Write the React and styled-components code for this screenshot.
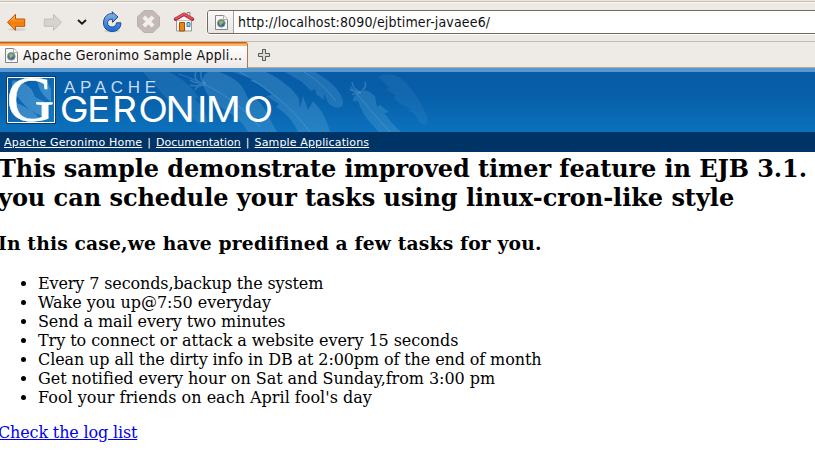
import React from 'react';
import styled, { createGlobalStyle } from 'styled-components';

const Global = createGlobalStyle`
  * { box-sizing: border-box; }
  html, body { margin: 0; background: #fff; overflow: hidden; }
  #root { height: 452px; }
`;

const Window = styled.div`
  display: flex;
  flex-direction: column;
  width: 815px;
  height: 452px;
  overflow: hidden;
  background: #fff;
`;

const Toolbar = styled.div`
  display: flex;
  align-items: flex-start;
  height: 41px;
  flex: none;
  background: linear-gradient(#e9e5df 0 1px, #c8bdb0 1px 2px, #fbfaf8 2px 3px, #edeae5 3px 100%);
`;

const Tools = styled.svg`
  width: 207px;
  height: 41px;
  flex: none;
`;

const Address = styled.div`
  display: flex;
  width: 620px;
  height: 24px;
  flex: none;
  margin-top: 10px;
  border: 1px solid #78675f;
  border-radius: 3px;
  background: #fff;
  box-shadow: 0 1px 0 #fff, -1px 0 0 #f8f6f4;
`;

const SiteBadge = styled.div`
  display: flex;
  width: 26px;
  padding: 3px 0 0 6px;
  border-right: 1px solid #aaa09a;
  border-radius: 2px 0 0 2px;
  background: linear-gradient(#fbfafa, #e9e5e2);
`;

const Label = styled.span`
  font-family: "DejaVu Sans Condensed", "DejaVu Sans", sans-serif;
  font-size: 14px;
  font-stretch: condensed;
  letter-spacing: ${(p) => p.$tracking}px;
  color: #101010;
  white-space: nowrap;
`;

const Url = styled(Label)`
  padding-left: 4px;
  line-height: 23px;
`;

const TabStrip = styled.div`
  display: flex;
  height: 27px;
  flex: none;
  border-top: 1px solid #c5baae;
  border-bottom: 1px solid #b9a995;
  background: #eeebe6;
`;

const Tab = styled.div`
  display: flex;
  align-items: flex-start;
  gap: 4px;
  width: 248px;
  height: 26px;
  padding: 5px 0 0 4px;
  border-right: 1px solid #ac7750;
  border-radius: 0 3px 0 0;
  background: linear-gradient(#b8621b 0 1px, #f58e32 1px 2px, #ffb66b 2px 4px, #fff 4px, #ece8e4 100%);
`;

const TabTitle = styled(Label)`
  line-height: 17px;
`;

const Plus = styled.svg`
  width: 14px;
  height: 14px;
  margin: 6px 0 0 9px;
`;

const Banner = styled.header`
  height: 64px;
  flex: none;
  border-top: 4px solid #5998cf;
  background: linear-gradient(#085ba6, #075fa9 40%, #0c71bd);
`;

const BannerArt = styled.svg`
  display: block;
  width: 450px;
  height: 60px;
`;

const Nav = styled.nav`
  display: flex;
  gap: 5px;
  height: 20px;
  flex: none;
  padding-left: 4px;
  background: #003366;
  color: #fff;
  font: 11px/22px "DejaVu Sans", sans-serif;
  white-space: nowrap;
`;

const NavLink = styled.a`
  color: #fff;
  text-decoration: underline;
  letter-spacing: ${(p) => p.$tracking || 0}px;
`;

const Content = styled.main`
  margin-left: -2px;
  font-family: "DejaVu Serif", serif;
  color: #000;
  white-space: nowrap;
`;

const Title = styled.h1`
  margin: 0;
  padding-top: 2px;
  font-size: 24px;
  line-height: 29px;
`;

const TitleLine = styled.span`
  display: block;
  letter-spacing: ${(p) => p.$tracking}px;
`;

const Subtitle = styled.h2`
  margin: 20px 0 19px;
  font-size: 18.7px;
  line-height: 23px;
  letter-spacing: 0.17px;
`;

const Tasks = styled.ul`
  margin: 0 0 16px;
  padding: 0 0 0 40px;
  font-size: 16px;
  line-height: 19px;
`;

const Task = styled.li`
  letter-spacing: ${(p) => p.$tracking}px;
`;

const LogLink = styled.a`
  display: inline-block;
  font-size: 16px;
  line-height: 19px;
  letter-spacing: -0.15px;
  color: #0000ee;
  text-decoration: underline;
`;

function PageIcon() {
  return (
    <svg width="15" height="17" viewBox="0 0 15 17">
      <path d="M1.5 1.5h8.3l3.7 3.7v10.3h-12z" fill="#f6f6f4" stroke="#858681" />
      <path d="M9.5 1.5v4h4" fill="#fff" stroke="#b0b0ad" />
      <circle cx="7.3" cy="9.3" r="3.9" fill="#3a6794" stroke="#8da0b3" strokeWidth=".8" />
      <path d="M5 7.6l2-1.4 2.7 1-.4 2.3-1.7.6-.5 2-1.8-2z" fill="#9fb350" />
    </svg>
  );
}

function BrowserTools() {
  return (
    <Tools viewBox="0 0 207 41">
      <defs>
        <linearGradient id="orange" x2="0" y2="1"><stop stopColor="#ffc263" /><stop offset=".55" stopColor="#f57900" /><stop offset="1" stopColor="#ffa52c" /></linearGradient>
        <linearGradient id="blue" x2="0" y2="1"><stop stopColor="#91b8e1" /><stop offset="1" stopColor="#1769dc" /></linearGradient>
      </defs>
      <ellipse cx="17" cy="29.5" rx="9" ry="1.5" fill="#d5d1cc" />
      <path d="M7.5 22.3l8-8v4.7h9.2v7.3h-9.2v4z" fill="url(#orange)" stroke="#b9520a" strokeLinejoin="round" />
      <path d="M61.5 22.3l-8-8v4.7h-9.2v7.3h9.2v4z" fill="#d6d2cd" stroke="#c2beb8" strokeLinejoin="round" />
      <path d="M78 20l4 3.7 4-3.7" fill="none" stroke="#171717" strokeWidth="1.8" />
      <ellipse cx="112" cy="31" rx="8" ry="1.5" fill="#d4d0cb" />
      <path d="M108.5 14.2c1.5-.6 3-.7 4.1-.3l-.6-2.2 6 5.3-5.4 5.4-.3-3.2c-3.2-.1-4.8 1.4-4.8 3.6 0 2.7 2 4.2 4.6 4.2 2.4 0 4.2-1.5 4.4-4.2h4.4c.2 5.4-4 8.7-8.6 8.7-5.1 0-8.8-3.7-8.8-8.5 0-4.3 2-7.3 5-8.8z" fill="url(#blue)" stroke="#204a87" />
      <path d="M144 10.5h9l6.5 6.5v9l-6.5 6.5h-9l-6.5-6.5v-9z" fill="#c3bab7" stroke="#b9b0ad" />
      <path d="M143.8 16.8l9.3 9.3m0-9.3l-9.3 9.3" stroke="#f2efed" strokeWidth="4" />
      <path d="M187 14v-1.5h3V18h-3z" fill="#ddd" stroke="#777" strokeWidth=".8" />
      <path d="M176.5 20.5h15v10.5h-15z" fill="#f7f7f5" stroke="#999794" />
      <path d="M176.5 20.5l7.5-5 7.5 5z" fill="#f7f7f5" />
      <path d="M175.5 19.2l8.5-5 8.5 5" fill="none" stroke="#b52c38" strokeWidth="3.6" strokeLinejoin="round" strokeLinecap="round" />
      <path d="M175.5 19l8.5-5 8.5 5" fill="none" stroke="#df5558" strokeWidth="2" />
      <path d="M179.5 22.5h5V31h-5z" fill="#ed8518" stroke="#aa4b06" />
      <path d="M187 22.5h3v4h-3z" fill="#90d1ed" stroke="#477ead" />
    </Tools>
  );
}

function GeronimoArt() {
  return (
    <BannerArt viewBox="0 0 450 60">
      <defs>
        <linearGradient id="square" x2="1" y2="1"><stop stopColor="#075ba7" /><stop offset="1" stopColor="#1677bd" /></linearGradient>
        <clipPath id="frame"><path d="M7 5h48v46H7z" /></clipPath>
      </defs>
      <g fill="#65acdb">
        <path d="M143 0h26c14 7 24 15 30 27l-5-1 9 10 5 14c-4 4-11 1-18-5l-8-8 1 5c-14-11-25-26-40-42z" opacity=".19" />
        <path d="M203 12c-1-6 1-10 5-12h11c12 4 20 10 24 16l7 14 2-6c8 5 13 12 18 23l7 13h-29c-6-11-15-17-26-24-11-7-17-15-19-24z" opacity=".3" />
        <path d="M233 0h33c17 8 28 18 33 27l1 9 3-12 5 14 5-9c9 9 14 19 17 31h-32c-5-11-12-19-22-25l3-3-13-8 6-1c-10-8-14-12-22-14l4-2z" opacity=".3" />
        <path d="M285 0h30c12 7 25 16 28 29 1 8-7 9-15 2l-4-10v7l-8-6-1-5-4 2-9-9z" opacity=".26" />
        <path d="M353 29c0-8 8-13 17-9l5 4 2 11 3-2 9 7-5 1 7 9 10 10h-22c-8-8-17-18-21-31z" opacity=".27" />
        <path d="M378 5c8-5 18-3 25 3 10 9 18 22 23 34 4 10 0 14-7 8l-5-9-6-2 3-2-11-5-7-7 3-1-10-7 4-1z" opacity=".13" />
      </g>
      <g fill="none" stroke="#83bce3" opacity=".3">
        <path d="M179 2c24 8 54 22 81 53M240 0c30 17 53 37 70 60M304 0c14 8 23 18 32 29M350 14c15 17 25 30 40 46" strokeWidth="1" />
        <path d="M201 0c-1 7 1 10 5 12M196 0c-3 7 2 11 9 13M190 8c6 4 10 3 15 2M190 13c6 2 10 0 14-2M195 18c2-4 6-5 10-5M352 10c1 7 4 8 8 10M350 17c4 3 8 3 11 3M352 23c2-2 6-3 9-2M362 18c4-2 4-5 3-8" strokeWidth="1.6" />
      </g>
      <path d="M6 4h50v48H6z" fill="#163a60" />
      <path d="M7.5 5.5h47v45h-47z" fill="url(#square)" stroke="#fff" />
      <path d="M12 9c6-2 15 3 20 9l3 7 10 5v15c-13-4-21-11-27-20l-6-5zM12 30c8 1 22 9 28 17H23c-8-5-12-11-11-17zM38 8h8l5 9v13c-9-7-14-15-13-22z" fill="#73b6e4" opacity=".42" />
      <g clipPath="url(#frame)">
        <text x="6.5" y="49.4" textLength="48" lengthAdjust="spacingAndGlyphs" fill="#fff" stroke="#fff" strokeWidth=".4" fontFamily="Liberation Serif, serif" fontSize="65">G</text>
      </g>
      <text x="64" y="21" textLength="92" fill="#c5dbef" fontFamily="Liberation Sans, sans-serif" fontSize="17">APACHE</text>
      <text transform="scale(1.1 1)" x="54.3 79 101.9 125.8 150.4 179 187 221.4" y="50.4" fill="#fff" fontFamily="Inter, Liberation Sans, sans-serif" fontSize="35.3">GERONIMO</text>
    </BannerArt>
  );
}

const tasks = [
  ['Every 7 seconds,backup the system', -0.12],
  ['Wake you up@7:50 everyday', -0.04],
  ['Send a mail every two minutes', -0.1],
  ['Try to connect or attack a website every 15 seconds', -0.06],
  ['Clean up all the dirty info in DB at 2:00pm of the end of month', -0.11],
  ['Get notified every hour on Sat and Sunday,from 3:00 pm', -0.04],
  ["Fool your friends on each April fool's day", 0.01],
];

export default function App() {
  return (
    <Window>
      <Global />
      <Toolbar>
        <BrowserTools />
        <Address>
          <SiteBadge><PageIcon /></SiteBadge>
          <Url $tracking={0.15}>http://localhost:8090/ejbtimer-javaee6/</Url>
        </Address>
      </Toolbar>
      <TabStrip>
        <Tab><PageIcon /><TabTitle $tracking={0.25}>Apache Geronimo Sample Appli...</TabTitle></Tab>
        <Plus viewBox="0 0 14 14"><path d="M5.5 1.5h3v4h4v3h-4v4h-3v-4h-4v-3h4z" fill="#d9dbd7" stroke="#555753" /></Plus>
      </TabStrip>
      <Banner><GeronimoArt /></Banner>
      <Nav>
        <NavLink $tracking={0.2}>Apache Geronimo Home</NavLink><span>|</span>
        <NavLink>Documentation</NavLink><span>|</span>
        <NavLink $tracking={0.14}>Sample Applications</NavLink>
      </Nav>
      <Content>
        <Title>
          <TitleLine $tracking={-0.09}>This sample demonstrate improved timer feature in EJB 3.1.</TitleLine>
          <TitleLine $tracking={-0.04}>you can schedule your tasks using linux-cron-like style</TitleLine>
        </Title>
        <Subtitle>In this case,we have predifined a few tasks for you.</Subtitle>
        <Tasks>{tasks.map(([task, tracking]) => <Task key={task} $tracking={tracking}>{task}</Task>)}</Tasks>
        <LogLink>Check the log list</LogLink>
      </Content>
    </Window>
  );
}
